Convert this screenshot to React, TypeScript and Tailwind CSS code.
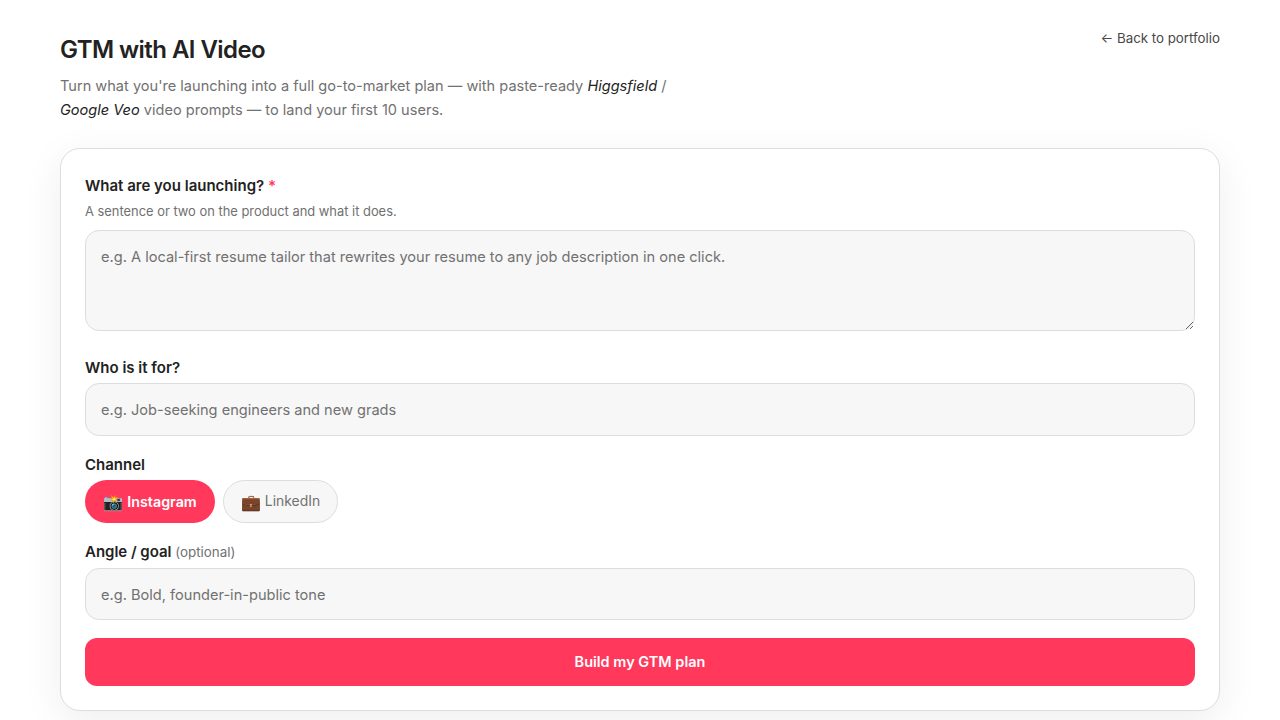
const FONT = "font-['Inter','Liberation_Sans',sans-serif]";

const FIELD =
  "block w-full rounded-[14px] border border-[#dddddd] bg-[#f7f7f7] px-[15px] text-[14.6px] text-[#222222] placeholder:text-[#717171] outline-none";

export default function App() {
  return (
    <div className={`${FONT} h-[720px] overflow-hidden bg-white px-[60px] pt-[33px] text-[#222222]`}>
      <header className="flex items-start justify-between">
        <div>
          <h1 className="text-[24px] leading-[34px] font-semibold tracking-[-0.56px] text-[#222222]">GTM with AI Video</h1>
          <p className="mt-[8px] w-[640px] text-[14.57px] leading-[23.5px] text-[#717171]">
            Turn what you're launching into a full go-to-market plan — with paste-ready{" "}
            <em className="text-[#222222]">Higgsfield</em> / <em className="text-[#222222]">Google Veo</em> video prompts — to
            land your first 10 users.
          </p>
        </div>
        <a className="mt-[-5px] text-[13.3px] leading-[20px] text-[#484848]">← Back to portfolio</a>
      </header>

      <form className="mt-[26px] rounded-[20px] border border-[#dddddd] bg-white px-[24px] pt-[25px] pb-[24px] shadow-[0_10px_40px_rgba(0,0,0,0.07)]">
        <label className="block text-[15px] leading-[24px] font-semibold">
          What are you launching? <span className="text-[#ff385c]">*</span>
        </label>
        <p className="mt-[4px] text-[12.9px] leading-[20px] text-[#717171]">A sentence or two on the product and what it does.</p>
        <textarea
          rows={3}
          placeholder="e.g. A local-first resume tailor that rewrites your resume to any job description in one click."
          className={`${FIELD} mt-[8px] h-[101px] pt-[14px] pb-[14px] leading-[24px]`}
        />

        <label className="mt-[25px] block text-[15px] leading-[24px] font-semibold">Who is it for?</label>
        <input placeholder="e.g. Job-seeking engineers and new grads" className={`${FIELD} mt-[3px] h-[53px]`} />

        <label className="mt-[17px] block text-[15px] leading-[24px] font-semibold">Channel</label>
        <div className="mt-[3px] flex gap-[8px]">
          <button type="button" className="flex h-[43px] w-[130px] items-center justify-center gap-[4px] rounded-full bg-[#ff385c] text-[14.3px] font-semibold text-white">
            <span className="text-[16px] leading-none">📸</span> Instagram
          </button>
          <button type="button" className="flex h-[43px] w-[115px] items-center justify-center gap-[4px] rounded-full border border-[#dddddd] bg-[#f7f7f7] text-[13.9px] text-[#717171]">
            <span className="text-[16px] leading-none">💼</span> LinkedIn
          </button>
        </div>

        <label className="mt-[17px] block text-[15px] leading-[24px] font-semibold tracking-[-0.02px]">
          Angle / goal <span className="text-[13.4px] font-normal tracking-normal text-[#717171]">(optional)</span>
        </label>
        <input placeholder="e.g. Bold, founder-in-public tone" className={`${FIELD} mt-[4px] h-[52px] pt-[2px]`} />

        <button type="button" className="mt-[18px] block h-[48px] w-full rounded-[12px] bg-[#ff385c] text-[14.5px] font-semibold text-white">
          Build my GTM plan
        </button>
      </form>
    </div>
  );
}
